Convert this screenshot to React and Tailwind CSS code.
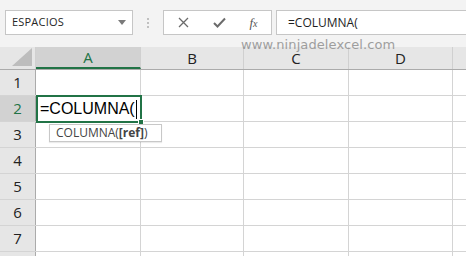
import React from 'react'

const cols = [
  { id: 'A', w: 'w-[105px]' },
  { id: 'B', w: 'w-[103px]' },
  { id: 'C', w: 'w-[105px]' },
  { id: 'D', w: 'w-[104px]' },
]

const rows = [1, 2, 3, 4, 5, 6, 7, '']

export default function App() {
  return (
    <div className="relative w-[466px] h-[256px] overflow-hidden bg-white font-['Open_Sans','Liberation_Sans',sans-serif]">
      {/* formula bar */}
      <div className="h-[47px] bg-[#f3f3f3] flex items-start pt-[10px] pl-[5px]">
        <div className="w-[128px] h-[25px] bg-white border border-[#c6c6c6] flex items-center justify-between pl-[6px] pr-[6px]">
          <span className="text-[11px] text-[#262626] tracking-[0.2px]">ESPACIOS</span>
          <svg width="8" height="5" viewBox="0 0 8 5"><path d="M0 0h8L4 5z" fill="#7a7a7a" /></svg>
        </div>
        <div className="w-[30px] h-[25px] flex flex-col items-center justify-center gap-[2px]">
          <span className="w-[2px] h-[2px] bg-[#c0c0c0]" />
          <span className="w-[2px] h-[2px] bg-[#c0c0c0]" />
          <span className="w-[2px] h-[2px] bg-[#c0c0c0]" />
        </div>
        <div className="w-[109px] h-[25px] bg-white border border-[#c6c6c6] flex items-center">
          <div className="w-[38px] flex justify-center">
            <svg width="11" height="11" viewBox="0 0 11 11"><path d="M1 1l9 9M10 1l-9 9" stroke="#6b6b6b" strokeWidth="1.3" /></svg>
          </div>
          <div className="w-[34px] flex justify-center">
            <svg width="13" height="11" viewBox="0 0 13 11"><path d="M1 6l3.5 3.5L12 1.5" stroke="#6b6b6b" strokeWidth="2" fill="none" /></svg>
          </div>
          <div className="w-[35px] flex justify-center">
            <span className="font-['Liberation_Serif',serif] italic text-[13px] text-[#555] leading-none">f<span className="text-[10px]">x</span></span>
          </div>
        </div>
        <div className="ml-[4px] flex-1 h-[25px] bg-white border border-[#c6c6c6] border-r-0 flex items-center pl-[11px]">
          <span className="text-[12px] text-[#1e1e1e]">=COLUMNA(</span>
        </div>
      </div>

      {/* column headers */}
      <div className="flex h-[23px] bg-[#e6e6e6] border-b border-[#ababab]">
        <div className="w-[36px] h-full border-r border-[#d0d0d0] flex items-end justify-end pr-[3px] pb-[3px]">
          <svg width="20" height="18" viewBox="0 0 20 18"><path d="M20 0V18H0z" fill="#bdbdbd" /></svg>
        </div>
        {cols.map((c) => (
          <div
            key={c.id}
            className={`${c.w} h-full border-r border-[#d0d0d0] flex items-center justify-center text-[15px] ${c.id === 'A' ? 'bg-[#d2d2d2] text-[#217346] border-b-2 border-b-[#217346]' : 'text-[#222]'}`}
          >
            {c.id}
          </div>
        ))}
        <div className="flex-1" />
      </div>

      {/* grid */}
      {rows.map((r, i) => (
        <div key={i} className="flex h-[26px] border-b border-[#d4d4d4]">
          <div
            className={`w-[36px] h-full border-r border-[#ababab] flex items-center justify-center text-[15px] ${r === 2 ? 'bg-[#d2d2d2] text-[#217346]' : 'bg-[#e6e6e6] text-[#222]'}`}
          >
            {r}
          </div>
          {cols.map((c) => (
            <div key={c.id} className={`${c.w} h-full border-r border-[#d4d4d4]`} />
          ))}
          <div className="flex-1" />
        </div>
      ))}

      {/* active cell A2 */}
      <div className="absolute left-[36px] top-[95px] w-[106px] h-[28px] border-2 border-[#217346] flex items-center pl-[2px]">
        <span className="font-['Liberation_Sans',sans-serif] text-[16px] text-black leading-none">=COLUMNA(</span>
        <span className="w-[1px] h-[19px] bg-black ml-[1px]" />
        <span className="absolute right-[-4px] bottom-[-4px] w-[6px] h-[6px] bg-[#217346] border border-white" />
      </div>

      {/* function tooltip */}
      <div className="absolute left-[49px] top-[124px] w-[113px] h-[18px] pl-[6px] bg-white border border-[#c8c8c8] flex items-center shadow-[0_1px_1px_rgba(0,0,0,0.08)]">
        <span className="text-[12px] text-[#444] leading-none">
          COLUMNA(<span className="font-bold">[ref]</span>)
        </span>
      </div>

      {/* watermark */}
      <div className="absolute left-[241px] top-[35px] text-[13px] tracking-[0.1px] text-[#8a8a8a] opacity-80 font-['DejaVu_Sans',sans-serif]">
        www.ninjadelexcel.com
      </div>
    </div>
  )
}
